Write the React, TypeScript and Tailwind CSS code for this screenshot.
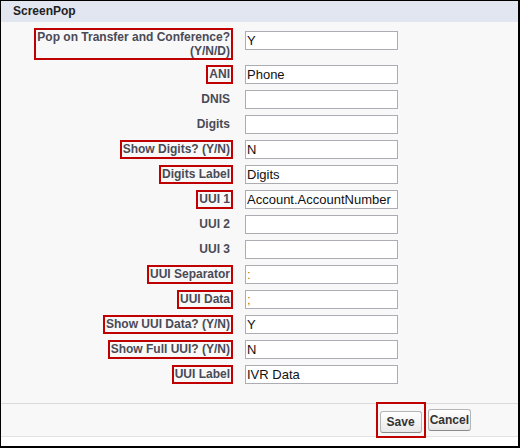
const rows: { label: string[]; value: string; boxed: boolean; tone?: string }[] = [
  { label: ['Pop on Transfer and Conference?', '(Y/N/D)'], value: 'Y', boxed: true },
  { label: ['ANI'], value: 'Phone', boxed: true },
  { label: ['DNIS'], value: '', boxed: false },
  { label: ['Digits'], value: '', boxed: false },
  { label: ['Show Digits? (Y/N)'], value: 'N', boxed: true },
  { label: ['Digits Label'], value: 'Digits', boxed: true },
  { label: ['UUI 1'], value: 'Account.AccountNumber', boxed: true },
  { label: ['UUI 2'], value: '', boxed: false },
  { label: ['UUI 3'], value: '', boxed: false },
  { label: ['UUI Separator'], value: ':', boxed: true, tone: 'gold' },
  { label: ['UUI Data'], value: ';', boxed: true, tone: 'gold' },
  { label: ['Show UUI Data? (Y/N)'], value: 'Y', boxed: true },
  { label: ['Show Full UUI? (Y/N)'], value: 'N', boxed: true },
  { label: ['UUI Label'], value: 'IVR Data', boxed: true },
];

function FieldRow({ row }: { row: (typeof rows)[number] }) {
  const tall = row.label.length > 1;
  return (
    <div className={`grid grid-cols-[232px_153px] gap-x-[12px] ${tall ? 'h-[34px]' : 'h-[25px]'}`}>
      <div className="text-right">
        <span
          className={`mt-[1px] inline-block border-2 px-[1px] text-[12px] font-bold leading-[14px] text-[#4a4a56] ${
            row.boxed ? 'border-[#c00000]' : 'border-transparent'
          } ${tall ? '' : 'leading-[15px]'}`}
        >
          {row.label.map((line, i) => (
            <span key={i} className="block">
              {line}
            </span>
          ))}
        </span>
      </div>
      <div>
        <input
          readOnly
          defaultValue={row.value}
          className={`mt-[4px] block h-[19px] w-[153px] border border-[#abadb3] bg-white px-[1px] text-[13px] leading-[15px] outline-none ${
            row.tone === 'gold' ? 'text-[#b07a10]' : 'text-[#111]'
          }`}
        />
      </div>
    </div>
  );
}

export default function App() {
  return (
    <div className="flex h-[448px] w-[520px] flex-col border-b-2 border-l border-r-2 border-t border-black bg-white font-['Liberation_Sans',Arial,sans-serif]">
      {/* Header */}
      <div className="h-[21px] bg-[#e2e6f0] pl-[12px] text-[12px] font-bold leading-[21px] text-[#222]">ScreenPop</div>

      {/* Form body */}
      <div className="h-[381px] bg-[#f8f8f8] pt-[5px]">
        {rows.map((row) => (
          <FieldRow key={row.label[0]} row={row} />
        ))}
      </div>

      {/* Buttons */}
      <div className="flex h-[34px] justify-end gap-[6px] border-b border-t border-b-[#e2e2e2] border-t-[#dadada] bg-[#f8f8f8] pr-[47px] pt-[5px]">
        <div className="relative h-[22px]">
          <button className="h-[22px] rounded-[3px] border border-[#b5b5b5] border-b-[#8a8a8a] bg-linear-to-b from-white to-[#e9e9e9] px-[6px] text-[12px] font-bold text-[#333]">
            Save
          </button>
          <div className="pointer-events-none absolute -bottom-[7px] -left-[4px] -right-[4px] -top-[7px] z-10 border-2 border-[#c00000]" />
        </div>
        <button className="h-[22px] rounded-[3px] border border-[#b5b5b5] border-b-[#8a8a8a] bg-linear-to-b from-white to-[#e9e9e9] px-[1px] text-[12px] font-bold text-[#333]">
          Cancel
        </button>
      </div>
    </div>
  );
}
